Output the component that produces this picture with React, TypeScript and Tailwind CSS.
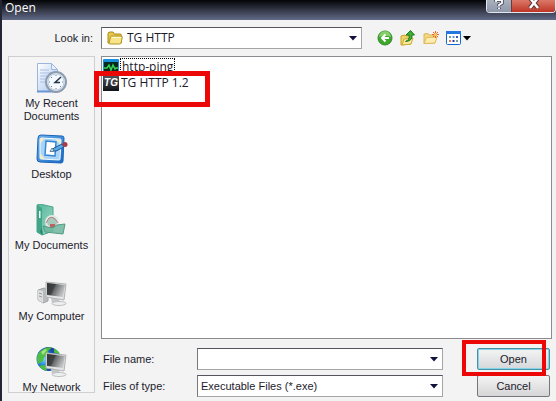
import type { ReactNode } from "react";

const Caret = ({ className = "" }: { className?: string }) => (
  <svg className={className} width="8" height="5" viewBox="0 0 8 5" aria-hidden="true">
    <path d="M0 0h8L4 4.5z" fill="currentColor" />
  </svg>
);

const FolderIcon = () => (
  <svg width="16" height="14" viewBox="0 0 16 14" aria-hidden="true">
    <path d="M1 12V3q0-2 2-2h3l1.500 2H13q1.500 0 1.500 1.500V12z" fill="#e8c84a" stroke="#a88a1c" />
    <path d="M2 12.500 3.500 6q.3-1 1.300-1H14q1.500 0 1.300 1.500L14 12q-.3 1-1.500 1H2.500z" fill="#f8e588" stroke="#b1932a" />
    <path d="M4.500 6.500h9" stroke="#fffbd0" />
  </svg>
);

const BackIcon = () => (
  <svg width="16" height="16" viewBox="0 0 16 16" aria-hidden="true">
    <circle cx="8" cy="8" r="7" fill="#41a52f" stroke="#2f8a24" />
    <path d="M2 7a6 6 0 0 1 12 0Q8 4 2 7z" fill="#86cf6b" />
    <path d="M12 8H5m3.500-3.500L5 8l3.500 3.500" fill="none" stroke="#fff" strokeWidth="2" />
  </svg>
);

const UpIcon = () => (
  <svg width="16" height="16" viewBox="0 0 16 16" aria-hidden="true">
    <path d="M1 15V6l4-1 1 1 5-1v9z" fill="#f0d468" stroke="#c9a22d" />
    <path d="m2 15 2-6 9-1-2 6z" fill="#fbeb9b" stroke="#cfab3c" />
    <path d="M5.500 11.500Q10 10 9 5H6L10.500.5 14.500 5h-2.500q.7 6-6.500 6.500z" fill="#3fae35" stroke="#1c7a20" />
  </svg>
);

const NewFolderIcon = () => (
  <svg width="16" height="14" viewBox="0 0 16 14" aria-hidden="true">
    <path d="M1 12.500V3l4-.5 1 1.500h6v8z" fill="#f4d982" stroke="#dcb656" />
    <path d="m1 12.500 2.500-6L14 6l-2 6z" fill="#fdeeb0" stroke="#e0b95e" />
    <path d="M12.500 0v7M9 3.500h7M10 1l5 5m0-5-5 5" stroke="#e8622c" />
    <circle cx="12.500" cy="3.500" r="1.500" fill="#fbd26c" />
  </svg>
);

const ViewIcon = () => (
  <svg width="15" height="14" viewBox="0 0 15 14" aria-hidden="true">
    <rect x=".5" y=".5" width="14" height="13" rx="1" fill="#fff" stroke="#1666cf" />
    <path d="M0 0h15v3H0z" fill="#2477de" />
    <path d="M3 5h2v2H3zM10 9h2v2h-2z" fill="#7b9f95" />
    <path d="M6.500 5h2v2h-2z" fill="#6a8fd0" />
    <path d="M10 5h2v2h-2z" fill="#3b55b5" />
    <path d="M3 9h2v2H3z" fill="#e47851" />
    <path d="M6.500 9h2v2h-2z" fill="#2438a8" />
  </svg>
);

const RecentIcon = () => (
  <svg width="32" height="32" viewBox="0 0 32 32" aria-hidden="true">
    <defs>
      <linearGradient id="page" x2="1" y2="1"><stop stopColor="#fff" /><stop offset="1" stopColor="#a9c6ee" /></linearGradient>
    </defs>
    <path d="M1.500 1.500h14l6 6v22h-20z" fill="url(#page)" stroke="#9bb5dd" />
    <path d="M15.500 1.500v6h6z" fill="#e8f1fd" stroke="#9bb5dd" />
    <path d="M4 8h9M4 11h14M4 14h9M4 17h7M4 20h7" stroke="#a9c0e5" />
    <path d="M1 29.500h21" stroke="#6794d5" strokeWidth="2" />
    <circle cx="20" cy="20" r="10" fill="#e5edf5" stroke="#8d9cae" strokeWidth="2" />
    <circle cx="20" cy="20" r="8" fill="#f4faff" stroke="#bacbdc" />
    <path d="M20 13v1M20 26v1M13 20h1M26 20h1M15 15l1 1M15 25l1-1M25 25l-1-1" stroke="#6e8093" />
    <path d="m25 15-6 5.500h5" fill="none" stroke="#25374a" strokeWidth="1.500" />
  </svg>
);

const DesktopIcon = () => (
  <svg width="32" height="32" viewBox="0 0 32 32" aria-hidden="true">
    <defs>
      <linearGradient id="blotter" x2="1" y2="1"><stop stopColor="#6db4f0" /><stop offset="1" stopColor="#1467c4" /></linearGradient>
    </defs>
    <path d="m5 2 21 1q2 0 2 2l-1 23q0 2-2 2L4 29q-3 0-3-3L2 5q0-3 3-3z" fill="url(#blotter)" stroke="#1b65b8" />
    <path d="m5 5 19 1q1 0 1 1l-1 19q0 1-1 1L5 26q-1 0-1-1L4 6z" fill="#a9d4f8" stroke="#f2faff" />
    <path d="M4 5h5l-5 6zM19 6l6 1v5zM4 20l5 6H4z" fill="#f3ecc9" />
    <path d="m10 8 10 1-1 14-10-1z" fill="#fff" stroke="#3687d3" strokeWidth="1.500" />
    <path d="m15 18 3-3 8-4 2 3-8 4z" fill="#59a9e8" stroke="#1c5594" />
    <path d="m14 18.500 4-.5-2-3z" fill="#fff3cf" stroke="#1c5594" strokeWidth=".7" />
    <circle cx="29" cy="11.500" r="2.500" fill="#a93b48" />
  </svg>
);

const DocumentsIcon = () => (
  <svg width="32" height="32" viewBox="0 0 32 32" aria-hidden="true">
    <defs>
      <linearGradient id="binder" x2="1" y2="1"><stop stopColor="#55b69a" /><stop offset="1" stopColor="#9bd8c4" /></linearGradient>
    </defs>
    <path d="m1 1 3-1 13 3v24L6 31 1 28z" fill="url(#binder)" stroke="#4aa58a" />
    <path d="m1 1 5 3v27l-5-3z" fill="#43a587" />
    <path d="M3 7h1.500v7H3z" fill="#f1fffa" />
    <circle cx="16" cy="18" r="6" fill="#a9c9bd" stroke="#e3e8e6" strokeWidth="2" />
    <path d="m10 19 3-5q3-2 6 1l3 4" fill="none" stroke="#b98280" />
    <path d="M14 20h5v4h-5z" fill="#bf625f" />
    <path d="m7 22 9 2 5-3 8-1-2 10-18-2z" fill="#6fb69f" fillOpacity=".85" stroke="#529d87" />
    <path d="m6 24 1 7-3-3z" fill="#26846a" />
  </svg>
);

const Monitor = () => (
  <>
    <path d="m15 23 8 1 1 4h-8z" fill="#c4c6c7" />
    <ellipse cx="23" cy="28.500" rx="7" ry="2" fill="#eeefef" stroke="#bcbfc0" />
    <path d="m10 7 20 2-2 16-18-3z" fill="#e4e5e5" stroke="#b1b4b5" />
    <path d="m11 8 18 2-2 12-16-2z" fill="url(#screen)" />
    <path d="m11 8 9 1-5 11-4-.5z" fill="#292b2c" fillOpacity=".55" />
  </>
);

const ScreenGradient = () => (
  <defs>
    <linearGradient id="screen" x2="1" y2=".4"><stop stopColor="#3c3f40" /><stop offset=".5" stopColor="#646768" /><stop offset="1" stopColor="#c3c5c5" /></linearGradient>
    <radialGradient id="globe" cx=".3" cy=".5"><stop stopColor="#72d9ff" /><stop offset=".5" stopColor="#2688dc" /><stop offset="1" stopColor="#1746a5" /></radialGradient>
  </defs>
);

const ComputerIcon = () => (
  <svg width="32" height="32" viewBox="0 0 32 32" aria-hidden="true">
    <ScreenGradient />
    <path d="m2 15 6-2 4 2v11l-5 2-5-3z" fill="#b9bcbd" stroke="#a0a3a4" />
    <path d="m2 15 5 1v12l-5-3z" fill="#dddfdf" />
    <path d="m3 18 3 1m-3 2 3 1" stroke="#999" />
    <Monitor />
  </svg>
);

const NetworkIcon = () => (
  <svg width="32" height="32" viewBox="0 0 32 32" aria-hidden="true">
    <ScreenGradient />
    <circle cx="12.500" cy="13" r="12" fill="url(#globe)" />
    <path d="M2 8Q8 0 16 1.500l-4 3.500 1 3-5 3-1 4-5 3Q0 13 2 8zM18 2.500q5 2 6 6l-6-2zM3 20l6-1 2 6q-5-1-8-5z" fill="#4fbd40" />
    <path d="m5 6 4-3 2 1-4 5z" fill="#a4e282" />
    <Monitor />
  </svg>
);

const PingIcon = () => (
  <svg width="16" height="16" viewBox="0 0 16 16" aria-hidden="true">
    <rect width="16" height="16" rx="1" fill="#198fdd" />
    <path d="M1 3h14v11H1z" fill="#08291e" />
    <path d="M1 9h3l2-3 2 5 2-5 2 4 1-1h2" fill="none" stroke="#35d653" strokeWidth="1.500" />
  </svg>
);

const places: { label: string; icon: ReactNode }[] = [
  { label: "My Recent Documents", icon: <RecentIcon /> },
  { label: "Desktop", icon: <DesktopIcon /> },
  { label: "My Documents", icon: <DocumentsIcon /> },
  { label: "My Computer", icon: <ComputerIcon /> },
  { label: "My Network", icon: <NetworkIcon /> },
];

export default function App() {
  return (
    <div className="flex min-h-screen flex-col overflow-hidden border-l-2 border-[#252635] bg-[#f3f3f3] font-['Liberation_Sans',Arial,sans-serif] text-[11px] leading-[13px] text-[#1c1b2c]">
      <header className="flex h-5 items-start justify-between bg-linear-to-b from-[#050608] via-[#343847] to-[#626a88] pl-[3px]">
        <h1 className="font-['Open_Sans',sans-serif] text-[12px] leading-4 text-white">Open</h1>
        <div className="flex h-[13px] overflow-hidden rounded-b border border-t-0 border-[#e3e7ee]">
          <button aria-label="Help" className="flex w-6 items-start justify-center bg-linear-to-b from-[#aab1be] to-[#8f98aa]">
            <svg width="10" height="10" viewBox="0 0 10 10"><path d="M2 2V0h6v3L5 5v1m0 1.500V9" fill="none" stroke="#434959" strokeWidth="3.500" /><path d="M2 2V0h6v3L5 5v1m0 1.500V9" fill="none" stroke="#fff" strokeWidth="1.800" /></svg>
          </button>
          <button aria-label="Close" className="flex w-11 items-start justify-center border-l border-[#713836] bg-linear-to-b from-[#dc7868] to-[#bd3325]">
            <svg width="12" height="9" viewBox="0 0 12 9"><path d="m2-2 8 10M10-2 2 8" stroke="#5c3438" strokeWidth="4.500" /><path d="m2-2 8 10M10-2 2 8" stroke="#fff" strokeWidth="2.500" /></svg>
          </button>
        </div>
      </header>

      <main className="flex flex-1 flex-col gap-[7px] pt-[7px] pr-1 pb-1 pl-[6px]">
        <div className="flex items-center">
          <label htmlFor="folder" className="w-[93px] pr-2 text-right">Look in:</label>
          <div className="relative w-[261px]">
            <select id="folder" className="block h-[22px] w-full appearance-none border border-[#a5a5a8] border-t-[#55555e] border-l-[#77777e] bg-white pl-[25px] font-['Open_Sans',sans-serif] text-[12px] leading-4">
              <option>TG HTTP</option>
            </select>
            <span className="pointer-events-none absolute inset-y-0 left-[6px] flex items-center"><FolderIcon /></span>
            <span className="pointer-events-none absolute inset-y-0 right-[5px] flex items-center text-[#12103c]"><Caret /></span>
          </div>
          <div className="flex items-center gap-[7px] pl-[15px]">
            <button aria-label="Back"><BackIcon /></button>
            <button aria-label="Up one level"><UpIcon /></button>
            <button aria-label="Create new folder"><NewFolderIcon /></button>
            <button aria-label="View menu" className="flex items-center gap-[2px] text-black"><ViewIcon /><Caret /></button>
          </div>
        </div>

        <div className="flex flex-1 gap-[6px]">
          <nav className="mb-1 w-[87px] shrink-0 border border-[#cfcfd1] bg-[#f5f5f5] pt-[5px]">
            <ul className="flex flex-col gap-[10px]">
              {places.map((place) => (
                <li key={place.label} className="min-h-[61px] last:h-[46px] last:min-h-0">
                  <button className="flex w-full flex-col items-center gap-[3px] px-1 text-center">
                    {place.icon}
                    <span>{place.label}</span>
                  </button>
                </li>
              ))}
            </ul>
          </nav>

          <div className="flex min-w-0 flex-1 flex-col gap-[9px]">
            <ul className="flex-1 border border-[#8b8b90] bg-white pt-px pl-px font-['Open_Sans',sans-serif] text-[12px] leading-4">
              <li>
                <button className="flex h-[17px] items-center gap-px">
                  <PingIcon />
                  <span className="border border-dotted border-black px-px">http-ping</span>
                </button>
              </li>
              <li className="relative">
                <button className="flex items-center gap-[2px]">
                  <span className="h-4 w-4 bg-linear-to-b from-[#555a60] to-[#111417] text-center font-['Liberation_Sans',Arial,sans-serif] text-[10px] leading-4 font-bold text-white italic" aria-hidden="true">TG</span>
                  TG HTTP 1.2
                </button>
                <span className="pointer-events-none absolute -top-1 -left-[9px] h-9 w-[116px] border-5 border-[#ed0808]" />
              </li>
            </ul>

            <form className="flex flex-col gap-[5px]" onSubmit={(event) => event.preventDefault()}>
              <div className="flex items-center">
                <label htmlFor="filename" className="w-24 pl-[2px]">File name:</label>
                <div className="relative w-[246px]">
                  <input id="filename" className="block h-[22px] w-full border border-[#a5a5a8] border-t-[#55555e] border-l-[#77777e] bg-white pr-5 pl-1" />
                  <button type="button" aria-label="Recent file names" className="absolute inset-y-0 right-[5px] text-[#12103c]"><Caret /></button>
                </div>
                <div className="relative mr-[2px] ml-auto">
                  <button className="block h-[22px] w-[73px] rounded-[2px] border border-[#4b8fa6] bg-linear-to-b from-[#f4f4f4] to-[#d5d8da] ring-1 ring-[#83d5e8] ring-inset">Open</button>
                  <span className="pointer-events-none absolute -top-2 -left-[15px] h-9 w-[84px] border-4 border-[#ed0808]" />
                </div>
              </div>
              <div className="flex items-center">
                <label htmlFor="filetype" className="w-24 pl-[2px]">Files of type:</label>
                <div className="relative w-[246px]">
                  <select id="filetype" className="block h-[22px] w-full appearance-none border border-[#a5a5a8] border-t-[#55555e] border-l-[#77777e] bg-white pl-[3px]">
                    <option>Executable Files (*.exe)</option>
                  </select>
                  <span className="pointer-events-none absolute inset-y-0 right-[5px] flex items-center text-[#12103c]"><Caret /></span>
                </div>
                <button type="button" className="mr-[2px] ml-auto h-[22px] w-[73px] rounded-[2px] border border-[#77777b] bg-linear-to-b from-[#f4f4f4] to-[#d5d5d7]">Cancel</button>
              </div>
            </form>
          </div>
        </div>
      </main>
    </div>
  );
}
